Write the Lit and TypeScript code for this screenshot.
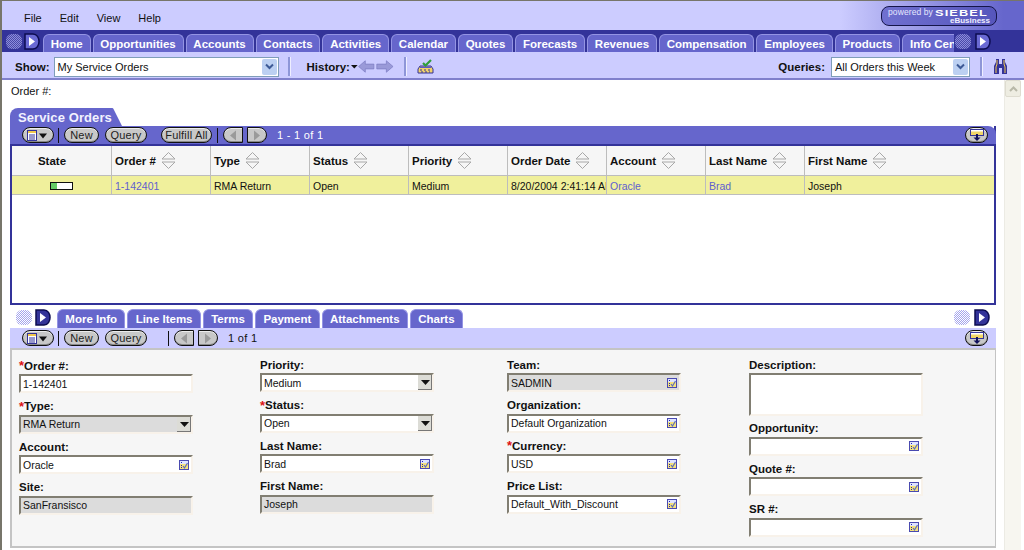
import { LitElement, html, css, svg } from 'lit';
import { customElement } from 'lit/decorators.js';

const NAV_TABS = ['Home', 'Opportunities', 'Accounts', 'Contacts', 'Activities', 'Calendar', 'Quotes', 'Forecasts', 'Revenues', 'Compensation', 'Employees', 'Products', 'Info Center'];
const SUB_TABS = ['More Info', 'Line Items', 'Terms', 'Payment', 'Attachments', 'Charts'];
const COLUMNS = ['Order #', 'Type', 'Status', 'Priority', 'Order Date', 'Account', 'Last Name', 'First Name'];

type Field = { label: string; value?: string; req?: boolean; kind?: 'select' | 'pick' | 'area'; ro?: boolean };

const FORM: { cls: string; fields: Field[] }[] = [
  {
    cls: 'first',
    fields: [
      { label: 'Order #:', value: '1-142401', req: true },
      { label: 'Type:', value: 'RMA Return', req: true, kind: 'select', ro: true },
      { label: 'Account:', value: 'Oracle', kind: 'pick' },
      { label: 'Site:', value: 'SanFransisco', ro: true },
    ],
  },
  {
    cls: '',
    fields: [
      { label: 'Priority:', value: 'Medium', kind: 'select' },
      { label: 'Status:', value: 'Open', req: true, kind: 'select' },
      { label: 'Last Name:', value: 'Brad', kind: 'pick' },
      { label: 'First Name:', value: 'Joseph', ro: true },
    ],
  },
  {
    cls: '',
    fields: [
      { label: 'Team:', value: 'SADMIN', kind: 'pick', ro: true },
      { label: 'Organization:', value: 'Default Organization', kind: 'pick' },
      { label: 'Currency:', value: 'USD', req: true, kind: 'pick' },
      { label: 'Price List:', value: 'Default_With_Discount', kind: 'pick' },
    ],
  },
  {
    cls: '',
    fields: [
      { label: 'Description:', kind: 'area' },
      { label: 'Opportunity:', kind: 'pick' },
      { label: 'Quote #:', kind: 'pick' },
      { label: 'SR #:', kind: 'pick' },
    ],
  },
];

const nextIcon = html`<svg class="next" width="16" height="17" viewBox="0 0 16 17">
  <path class="d" d="M1 1H9C13 1 15 5 15 8.500C15 12 13 16 9 16H1Z" stroke="#0c0c50" stroke-width="1.500"/>
  <path d="M5 4L11 8.500L5 13Z" fill="#ffffff"/>
</svg>`;

const sortIcon = html`<svg class="sort" width="15" height="19" viewBox="0 0 15 19">
  <path d="M1 8L7.500 1.500L14 8Z" fill="#f6f6f6" stroke="#a8a8a8"/>
  <path d="M1 11L7.500 17.500L14 11Z" fill="#f6f6f6" stroke="#a8a8a8"/>
</svg>`;

const pickIcon = html`<svg class="pick" width="10" height="10" viewBox="0 0 10 10">
  <rect x="0.500" y="0.500" width="9" height="9" fill="#f4e27a" stroke="#4a4ab0"/>
  <rect x="1" y="1" width="8" height="3" fill="#dfe4ff"/>
  <path d="M2 2h1v1H2zM2 5h1v1H2zM2 7h1v1H2z" fill="#2222aa"/>
  <path d="M4 6L5.500 8L8.500 3" fill="none" stroke="#5a6ac0" stroke-width="1.200"/>
</svg>`;

const menuPill = html`<span class="pill icon menu"><svg width="24" height="11" viewBox="0 0 24 11">
  <rect x="1.500" y="0.500" width="9" height="10" fill="#ffffff" stroke="#333399"/>
  <path d="M2 1h8v2H2z" fill="#f1c84c"/>
  <path d="M3 5h6M3 7h6M3 9h6" stroke="#333399"/>
  <path d="M13 3.500h8l-4 5z" fill="#111"/>
</svg></span>`;

const layoutPill = html`<span class="pill icon layout"><svg width="16" height="12" viewBox="0 0 16 12">
  <rect x="1.500" y="0.500" width="13" height="6" fill="#f1d668" stroke="#333399"/>
  <path d="M2 1h12v1.500H2z" fill="#ffffff"/>
  <path d="M8 5v4" stroke="#10105a" stroke-width="2"/>
  <path d="M4.500 8.500h7L8 12z" fill="#10105a"/>
</svg></span>`;

const arrowPill = (left: boolean) => html`<span class="pill icon step ${left ? 'prev' : 'nxt'}"><svg width="8" height="11" viewBox="0 0 8 11">
  ${left ? svg`<path d="M7 0.500V10.500L1 5.500Z" fill="#9a9a9a"/>` : svg`<path d="M1 0.500V10.500L7 5.500Z" fill="#9a9a9a"/>`}
</svg></span>`;

@customElement('app-root')
export class AppRoot extends LitElement {
  static styles = css`
    :host {
      display: block;
      width: 1024px;
      height: 550px;
      overflow: hidden;
      font-family: "Liberation Sans", Arial, sans-serif;
      font-size: 11px;
      color: #111;
      background: #fff;
    }
    .frame {
      display: flex;
      flex-direction: column;
      height: 550px;
      box-sizing: border-box;
      border-top: 1px solid #77756a;
      border-left: 2px solid #77756a;
    }

    .top {
      height: 29px;
      flex: none;
      display: flex;
      align-items: center;
      justify-content: space-between;
      padding-right: 27px;
      background: linear-gradient(90deg, #ccccff 0, #ccccff 82%, #6666cc 98%);
    }
    .menus {
      display: flex;
      gap: 18px;
      padding: 4px 0 0 22px;
    }
    .badge {
      width: 116px;
      height: 20px;
      border: 1px solid #15154a;
      border-radius: 8px;
      background: linear-gradient(90deg, #7070d0, #5656bc);
      color: #e6e6ff;
      display: grid;
      grid-template-columns: auto 1fr;
      grid-template-rows: 10px 8px;
      column-gap: 2px;
      padding-left: 6px;
      box-sizing: border-box;
      overflow: hidden;
      line-height: 9px;
    }
    .badge .by {
      font-size: 8.500px;
      padding-top: 1px;
      letter-spacing: 0.1px;
    }
    .badge .brand {
      font-size: 9.500px;
      font-weight: 700;
      letter-spacing: 0.8px;
      color: #fff;
      padding-top: 1px;
      transform: scaleX(1.35);
      transform-origin: left;
    }
    .badge .sub {
      grid-column: 1 / 3;
      justify-self: end;
      margin-right: 6px;
      font-size: 8px;
      line-height: 8px;
      font-weight: 700;
      color: #eef;
    }

    .nav {
      height: 22px;
      flex: none;
      display: flex;
      align-items: stretch;
      background: #333399;
    }
    .pager {
      flex: none;
      display: flex;
      align-items: center;
      gap: 2px;
    }
    .pager.left {
      width: 41px;
      padding-left: 4px;
      box-sizing: border-box;
    }
    .pager.right {
      width: 70px;
      padding-left: 1px;
      gap: 4px;
      box-sizing: border-box;
    }
    .dither {
      width: 16px;
      height: 15px;
      border-radius: 6px;
      background: repeating-conic-gradient(#8c8cdc 0 25%, #4a4aa8 0 50%) 0 0 / 2px 2px;
    }
    .next .d {
      fill: #6a6ad4;
    }
    .tabs {
      display: flex;
      gap: 2px;
      align-items: flex-end;
      flex: 1;
      min-width: 0;
      overflow: hidden;
    }
    .tab {
      flex: none;
      height: 18px;
      box-sizing: border-box;
      padding: 0 6.800px;
      display: flex;
      align-items: center;
      background: #6666cc;
      border: 1px solid #9494e4;
      border-bottom: 0;
      border-radius: 6px 6px 0 0;
      color: #fff;
      font-size: 11.500px;
      font-weight: 700;
      white-space: nowrap;
    }

    .toolbar {
      height: 28px;
      flex: none;
      box-sizing: border-box;
      padding-top: 3px;
      border-bottom: 2px solid #8080cc;
      background: #ccccff;
      display: flex;
      align-items: center;
      font-weight: 700;
      font-size: 11.500px;
    }
    .show {
      margin-left: 13px;
    }
    .combo {
      box-sizing: border-box;
      height: 20px;
      border: 1px solid #7f9db9;
      background: #fff;
      display: flex;
      align-items: center;
      justify-content: space-between;
      padding: 0 1px 0 3px;
      font-size: 11px;
      font-weight: 400;
    }
    .combo.a {
      width: 225px;
      margin-left: 4px;
    }
    .combo.b {
      width: 139px;
      margin-left: 6px;
    }
    .xp {
      width: 15px;
      height: 16px;
      border-radius: 2px;
      background: #bcd0f2;
      display: flex;
      align-items: center;
      justify-content: center;
    }
    .rule {
      width: 2px;
      height: 19px;
      background: #8e96d8;
      box-shadow: 1px 0 0 #eeeeff;
    }
    .rule.r1 {
      margin: 0 17px 0 9px;
    }
    .rule.r2 {
      margin: 0 11px 0 10px;
    }
    .rule.r3 {
      margin: 0 11px 0 10px;
    }
    .hist {
      display: flex;
      align-items: center;
    }
    .binoculars {
      margin-right: 16px;
    }
    .spring {
      flex: 1;
    }

    .body {
      flex: 1;
      min-height: 0;
      display: flex;
    }
    .main {
      flex: 1;
      min-width: 0;
      padding: 0 8px;
    }
    .scroll {
      flex: none;
      width: 17px;
      margin-right: 3px;
      box-sizing: border-box;
      background: #f7f6f0;
      border-left: 1px solid #ecebe4;
    }
    .scroll .up {
      height: 17px;
      box-sizing: border-box;
      border: 1px solid #dedcd0;
      border-radius: 2px;
      background: #eeede2;
      display: flex;
      align-items: center;
      justify-content: center;
    }

    .crumb {
      box-sizing: border-box;
      padding: 5px 0 0 1px;
      height: 28px;
    }
    .title {
      width: 112px;
      height: 18px;
      box-sizing: border-box;
      padding: 2px 0 0 8px;
      background: #6666cc;
      border-radius: 8px 10px 0 0;
      clip-path: polygon(0 0, 103px 0, 112px 100%, 0 100%);
      color: #f2f2ff;
      font-size: 13px;
      font-weight: 700;
      letter-spacing: 0.1px;
    }
    .list {
      height: 179px;
      box-sizing: border-box;
      border: solid #333399;
      border-width: 0 2px 2px;
    }
    .bar {
      height: 20px;
      display: flex;
      align-items: center;
      padding-left: 10px;
      padding-right: 6px;
      box-sizing: border-box;
      font-size: 11px;
    }
    .bar.dark {
      margin: 0 -2px;
      padding-left: 12px;
      padding-right: 8px;
      background: #6666cc;
      border-bottom: 2px solid #333399;
      border-radius: 0 8px 0 0;
      color: #fff;
      letter-spacing: 0.3px;
    }
    .bar.light {
      background: #ccccff;
      padding-left: 12px;
      padding-right: 8px;
      letter-spacing: 0.3px;
    }
    .pill {
      flex: none;
      height: 14px;
      box-sizing: content-box;
      padding: 0 5px;
      display: inline-flex;
      align-items: center;
      justify-content: center;
      border: 1px solid #111;
      border-radius: 8px;
      background: #c8c8c8;
      box-shadow: inset 0 -1px 0 #8a8a8a, inset 0 1px 0 #ececec;
      color: #222;
      font-size: 11px;
      letter-spacing: 0.2px;
      white-space: nowrap;
    }
    .pill.icon {
      padding: 0;
    }
    .pill.menu {
      width: 30px;
      margin-right: 4px;
    }
    .pill.layout {
      width: 21px;
    }
    .pill.step {
      width: 18px;
    }
    .pill.prev {
      border-radius: 8px 0 0 8px;
    }
    .pill.nxt {
      border-radius: 0 8px 8px 0;
      margin: 0 10px 0 4px;
    }
    .pill.new {
      width: 33px;
      padding: 0;
      margin-right: 6px;
    }
    .pill.query {
      width: 40px;
      padding: 0;
    }
    .pill.fulfill {
      width: 49px;
      padding: 0;
      margin-left: 14px;
    }
    .vbar {
      flex: none;
      width: 1px;
      height: 15px;
      background: #111;
      margin-right: 5px;
    }
    .vbar.after-fulfill {
      margin-left: 5px;
    }
    .vbar.after-query {
      margin-left: 21px;
    }

    .grid {
      display: grid;
      grid-template-columns: 100px repeat(7, 99px) 1fr;
    }
    .cell {
      box-sizing: border-box;
      border-right: 1px solid #bdbdbd;
      border-bottom: 1px solid #bdbdbd;
      padding: 0 3px;
      display: flex;
      align-items: center;
      white-space: nowrap;
      overflow: hidden;
      min-width: 0;
    }
    .cell:nth-child(9n) {
      border-right: 0;
    }
    .head {
      height: 30px;
      background: #f6f6f6;
      font-weight: 700;
      font-size: 11.500px;
    }
    .head.state {
      justify-content: center;
      padding-right: 22px;
    }
    .sort {
      margin-left: 5px;
      flex: none;
    }
    .row {
      height: 19px;
      padding-top: 1px;
      background: #f0f09c;
      font-size: 10.500px;
    }
    .row.state {
      justify-content: center;
      padding-right: 3px;
    }
    .link {
      color: #5f5fcf;
    }
    .gauge {
      width: 23px;
      height: 8px;
      box-sizing: border-box;
      border: 1px solid #111;
      background: linear-gradient(90deg, #66cc66 0 30%, #fff 30%);
    }

    .subnav {
      height: 21px;
      margin-top: 2px;
      display: flex;
      align-items: stretch;
    }
    .subnav .pager.left {
      width: 47px;
      padding-left: 6px;
      gap: 3px;
    }
    .subnav .tabs {
      flex: none;
    }
    .subnav .tab {
      height: 19px;
      padding: 0 7.300px;
    }
    .subnav .pager.right {
      margin-left: auto;
      width: auto;
      padding-right: 6px;
      gap: 4px;
    }
    .subnav .dither {
      background: repeating-conic-gradient(#a4a4ec 0 25%, #fff 0 50%) 0 0 / 2px 2px;
    }
    .subnav .next .d {
      fill: #333399;
    }

    .form {
      height: 200px;
      box-sizing: border-box;
      border: 2px solid #c4c4c4;
      border-right-width: 1px;
      background: #f6f6f6;
      display: grid;
      grid-template-columns: 241px 247px 242px 1fr;
      padding: 8px 0 0 7px;
    }
    .col {
      display: flex;
      flex-direction: column;
      gap: 6.500px;
    }
    .col.first {
      padding-top: 1px;
    }
    .fld {
      width: 174px;
      height: 34px;
      display: flex;
      flex-direction: column;
    }
    .fld.tall {
      height: 58px;
    }
    .fld.tall + .fld {
      margin-top: -1px;
    }
    .lbl {
      height: 15px;
      box-sizing: border-box;
      padding-bottom: 2px;
      flex: none;
      display: flex;
      align-items: center;
      font-size: 11.500px;
      font-weight: 700;
      white-space: nowrap;
    }
    .req {
      color: #dd1111;
      font-size: 13px;
      line-height: 11px;
      height: 11px;
      align-self: flex-start;
      margin-top: 1px;
    }
    .input {
      flex: 1;
      box-sizing: border-box;
      border: 2px solid;
      border-color: #817e72 #f8f2ea #f8f2ea #817e72;
      background: #fff;
      display: flex;
      align-items: center;
      justify-content: space-between;
      padding: 0 2px;
      font-size: 10.500px;
      white-space: nowrap;
    }
    .input.ro {
      background: #dcdcdc;
    }
    .drop {
      width: 14px;
      height: 15px;
      margin-right: -2px;
      background: #dcdcd6;
      box-shadow: inset -1px -1px 0 #777;
      display: flex;
      align-items: center;
      justify-content: center;
    }
    .pick {
      flex: none;
    }
  `;

  private field(f: Field) {
    const ro = f.ro ? 'ro' : '';
    return html`<div class="fld ${f.kind === 'area' ? 'tall' : ''}">
      <div class="lbl">${f.req ? html`<span class="req">*</span>` : ''}${f.label}</div>
      <div class="input ${ro}">
        <span>${f.value ?? ''}</span>
        ${f.kind === 'select'
          ? html`<span class="drop"><svg width="9" height="5" viewBox="0 0 9 5"><path d="M0 0H9L4.500 5Z" fill="#111"/></svg></span>`
          : ''}
        ${f.kind === 'pick' ? pickIcon : ''}
      </div>
    </div>`;
  }

  private chevron() {
    return html`<span class="xp"><svg width="9" height="7" viewBox="0 0 9 7"><path d="M1 1.500L4.500 5L8 1.500" fill="none" stroke="#3d5a96" stroke-width="2"/></svg></span>`;
  }

  render() {
    return html`
      <div class="frame">
        <div class="top">
          <div class="menus"><span>File</span><span>Edit</span><span>View</span><span>Help</span></div>
          <div class="badge">
            <span class="by">powered by</span><span class="brand">SIEBEL</span>
            <span class="sub">eBusiness</span>
          </div>
        </div>

        <div class="nav">
          <div class="pager left"><span class="dither"></span>${nextIcon}</div>
          <div class="tabs">${NAV_TABS.map((t) => html`<div class="tab">${t}</div>`)}</div>
          <div class="pager right"><span class="dither"></span>${nextIcon}</div>
        </div>

        <div class="toolbar">
          <span class="show">Show:</span>
          <div class="combo a"><span>My Service Orders</span>${this.chevron()}</div>
          <span class="rule r1"></span>
          <div class="hist">
            <span>History:</span>
            <svg width="44" height="15" viewBox="0 0 46 15">
              <path d="M1 6H8L4.500 9.500Z" fill="#111"/>
              <path d="M9 7.500L16 1.500V5H25V10H16V13.500Z" fill="#9a9ad8" stroke="#7a7ac0" stroke-width="0.700"/>
              <path d="M45 7.500L38 1.500V5H28V10H38V13.500Z" fill="#9a9ad8" stroke="#7a7ac0" stroke-width="0.700"/>
            </svg>
          </div>
          <span class="rule r2"></span>
          <svg width="17" height="16" viewBox="0 0 17 16">
            <path d="M1 10L3 7H14L16 10V14H1Z" fill="#f1d26a" stroke="#333399"/>
            <path d="M3 7.500H14V9H3Z" fill="#5a5ac8"/>
            <path d="M3 11h2M7 11h2M11 11h2M4 13h2M8 13h2M12 13h1" stroke="#333399"/>
            <path d="M6 4L8.500 6.500L14 1" fill="none" stroke="#2f9e3a" stroke-width="2.200"/>
          </svg>
          <span class="spring"></span>
          <span>Queries:</span>
          <div class="combo b"><span>All Orders this Week</span>${this.chevron()}</div>
          <span class="rule r3"></span>
          <svg class="binoculars" width="15" height="17" viewBox="0 0 15 17">
            <path d="M3 1H6V6H9V1H12V4L14 8V16H9V10H6V16H1V8L3 4Z" fill="#333399"/>
            <path d="M4 2V6L3 9V15" stroke="#f1c84c" fill="none"/>
            <path d="M11 2V6L12 9V15" stroke="#f1c84c" fill="none"/>
          </svg>
        </div>

        <div class="body">
          <div class="main">
            <div class="crumb"><span>Order #:</span></div>
            <div class="title">Service Orders</div>
            <div class="list">
              <div class="bar dark">
                ${menuPill}<span class="vbar"></span>
                <span class="pill new">New</span>
                <span class="pill query">Query</span>
                <span class="pill fulfill">Fulfill All</span>
                <span class="vbar after-fulfill"></span>
                ${arrowPill(true)}${arrowPill(false)}
                <span>1 - 1 of 1</span>
                <span class="spring"></span>
                ${layoutPill}
              </div>
              <div class="grid">
                <div class="cell head state">State</div>
                ${COLUMNS.map((c) => html`<div class="cell head">${c}${sortIcon}</div>`)}
                <div class="cell row state"><span class="gauge"></span></div>
                <div class="cell row link">1-142401</div>
                <div class="cell row">RMA Return</div>
                <div class="cell row">Open</div>
                <div class="cell row">Medium</div>
                <div class="cell row">8/20/2004 2:41:14 AM</div>
                <div class="cell row link">Oracle</div>
                <div class="cell row link">Brad</div>
                <div class="cell row">Joseph</div>
              </div>
            </div>

            <div class="subnav">
              <div class="pager left"><span class="dither"></span>${nextIcon}</div>
              <div class="tabs">${SUB_TABS.map((t) => html`<div class="tab">${t}</div>`)}</div>
              <div class="pager right"><span class="dither"></span>${nextIcon}</div>
            </div>
            <div class="bar light">
              ${menuPill}<span class="vbar"></span>
              <span class="pill new">New</span>
              <span class="pill query">Query</span>
              <span class="vbar after-query"></span>
              ${arrowPill(true)}${arrowPill(false)}
              <span>1 of 1</span>
              <span class="spring"></span>
              ${layoutPill}
            </div>
            <div class="form">
              ${FORM.map((c) => html`<div class="col ${c.cls}">${c.fields.map((f) => this.field(f))}</div>`)}
            </div>
          </div>
          <div class="scroll">
            <div class="up"><svg width="9" height="6" viewBox="0 0 9 6"><path d="M1 5L4.500 1.500L8 5" fill="none" stroke="#b8b8a8" stroke-width="2"/></svg></div>
          </div>
        </div>
      </div>
    `;
  }
}
